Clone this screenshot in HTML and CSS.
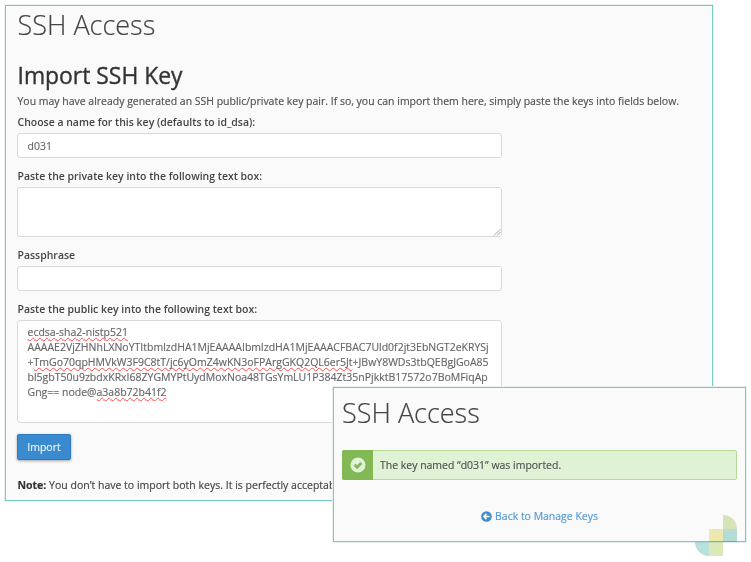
FILE: index.html
```html
<!DOCTYPE html>
<html lang="en">
<head>
<meta charset="utf-8">
<title>SSH Access</title>
<link rel="stylesheet" href="styles.css">
</head>
<body>
<main class="panel import-panel">
  <h1>SSH Access</h1>
  <h2>Import SSH Key</h2>
  <p class="intro">You may have already generated an SSH public/private key pair. If so, you can import them here, simply paste the keys into fields below.</p>
  <form class="key-form">
    <div class="field">
      <label for="name">Choose a name for this key (defaults to id_dsa):</label>
      <input id="name" class="control" type="text" value="d031">
    </div>
    <div class="field">
      <label for="private">Paste the private key into the following text box:</label>
      <div id="private" class="control area-small"><svg class="grip" viewBox="0 0 8 8"><path d="M1 7.5 7.5 1M4 7.5 7.5 4"/></svg></div>
    </div>
    <div class="field">
      <label for="pass">Passphrase</label>
      <input id="pass" class="control" type="text">
    </div>
    <div class="field">
      <label>Paste the public key into the following text box:</label>
      <div class="control area-large"><span class="typo">ecdsa-sha2-nistp521</span><br>AAAAE2VjZHNhLXNoYTItbmlzdHA1MjEAAAAIbmlzdHA1MjEAAACFBAC7Uld0f2jt3EbNGT2eKRYSj<br>+<span class="typo">TmGo70qpHMVkW3F9C8tT/jc6yOmZ4wKN3oFPArgGKQ2QL6er5Jt</span>+JBwY8WDs3tbQEBgJGoA85<br>bl5gbT50u9zbdxKRxI68ZYGMYPtUydMoxNoa48TGsYmLU1P384Zt35nPjkktB17572o7BoMFiqAp<br>Gng== node@<span class="typo">a3a8b72b41f2</span></div>
    </div>
    <button class="submit" type="button">Import</button>
  </form>
  <p class="note"><b>Note:</b> You don’t have to import both keys. It is perfectly acceptab</p>
</main>
<section class="panel result-panel">
  <h1>SSH Access</h1>
  <div class="alert">
    <div class="alert-icon"><svg viewBox="0 0 16 16"><circle cx="8" cy="8" r="7.5"/><path d="M4.6 7.8 7.1 10.2 11.3 6"/></svg></div>
    <p>The key named “d031” was imported.</p>
  </div>
  <a class="back"><svg viewBox="0 0 12 12"><circle cx="6" cy="6" r="5.8"/><path d="M9.4 6H3.4M6 3.2 3.2 6 6 8.8"/></svg>Back to Manage Keys</a>
</section>
<div class="brand"><i class="leaf"></i><i class="sea"></i><i class="sun"></i><i class="wave"></i><i class="lime"></i></div>
</body>
</html>
```
FILE: styles.css
```css
* { box-sizing: border-box; }
html, body { height: 100%; }
body {
  margin: 0;
  padding: 5px 0 0 5px;
  overflow: hidden;
  background: #fff;
  color: #505050;
  font: 10.47px/15px "Open Sans", "Noto Sans", sans-serif;
  -webkit-text-stroke: .15px currentColor;
}
h1, h2, p { margin: 0; }
h1 { font-size: 27px; line-height: 30px; font-weight: 300; color: #444; }
h2 { margin-top: 23px; padding-left: .5px; font-size: 22.9px; line-height: 26px; font-weight: 400; color: #333; -webkit-text-stroke-width: .35px; }
.panel { border: 1px solid #7bc8c6; background: #fafafa; box-shadow: 0 0 0 1px #e3f2f1; }
.import-panel { width: 708px; height: 496px; padding: 4px 11px; }
.import-panel h1 { padding-left: .5px; }
.intro { margin-top: 5px; padding-left: .5px; white-space: nowrap; }
.key-form { width: 485px; margin-top: 6px; display: flex; flex-direction: column; align-items: flex-start; gap: 11px; }
.field { width: 100%; display: flex; flex-direction: column; gap: 3px; }
label { font-weight: 600; color: #444; -webkit-text-stroke-width: 0; padding-left: .5px; }
.control {
  position: relative;
  width: 100%;
  height: 25px;
  margin: 0;
  padding: 4px 9.5px;
  border: 1px solid #d9d9d9;
  border-radius: 3px;
  outline: 0;
  background: #fff;
  color: #666;
  font: inherit;
}
.area-small { height: 50px; }
.area-large { height: 103px; white-space: nowrap; font-size: 10.5px; }
.grip { position: absolute; right: 0; bottom: 0; width: 8px; height: 8px; fill: none; stroke: #999; stroke-width: .9; }
.typo { text-decoration: underline wavy #ff4d4d 1px; text-underline-offset: 1px; text-decoration-skip-ink: none; }
.submit {
  width: 54px;
  height: 26px;
  padding: 0;
  border: 1px solid #2e78be;
  border-radius: 2px;
  background: #3a8ad0;
  box-shadow: 0 1px 3px rgba(0, 0, 0, .35);
  color: #f0f6fb;
  font: inherit;
}
.note { margin-top: 18px; padding-left: .5px; white-space: nowrap; color: #444; font-size: 10.53px; }
.note b { color: #333; }
.result-panel {
  position: absolute;
  left: 333px;
  top: 387px;
  width: 413px;
  height: 155px;
  padding: 10px 8px 0;
  display: flex;
  flex-direction: column;
}
.alert { display: flex; height: 30px; margin-top: 22px; border: 1px solid #b5d998; border-radius: 2px; background: #dff2d6; }
.alert-icon { width: 31px; margin: -1px 0 -1px -1px; background: #82b955; display: grid; place-items: center; border-radius: 2px 0 0 2px; }
.alert-icon svg { width: 16px; height: 16px; }
.alert-icon circle { fill: #e0f2d8; }
.alert-icon path { fill: none; stroke: #82b955; stroke-width: 2.8; }
.alert p { padding: 6.5px 0 0 7px; }
.back { display: flex; align-items: center; align-self: center; gap: 3px; margin-top: 29px; color: #5599d2; }
.back svg { width: 11px; height: 11px; }
.back circle { fill: #428bca; }
.back path { fill: none; stroke: #fafafa; stroke-width: 1.8; }
.brand { position: absolute; left: 695px; top: 515px; display: grid; grid-template: 14px 13px 14px / 14px 14px 14px; mix-blend-mode: multiply; }
.leaf { grid-area: 1 / 3; background: #dbe8bb; border-top-right-radius: 14px; }
.sun { grid-area: 2 / 2; background: #f1eeb2; }
.sea { grid-area: 2 / 3; background: #b8e0dd; }
.wave { grid-area: 3 / 1; background: #b8e0dd; border-bottom-left-radius: 14px; }
.lime { grid-area: 3 / 2; background: #dbe9b9; }
```
